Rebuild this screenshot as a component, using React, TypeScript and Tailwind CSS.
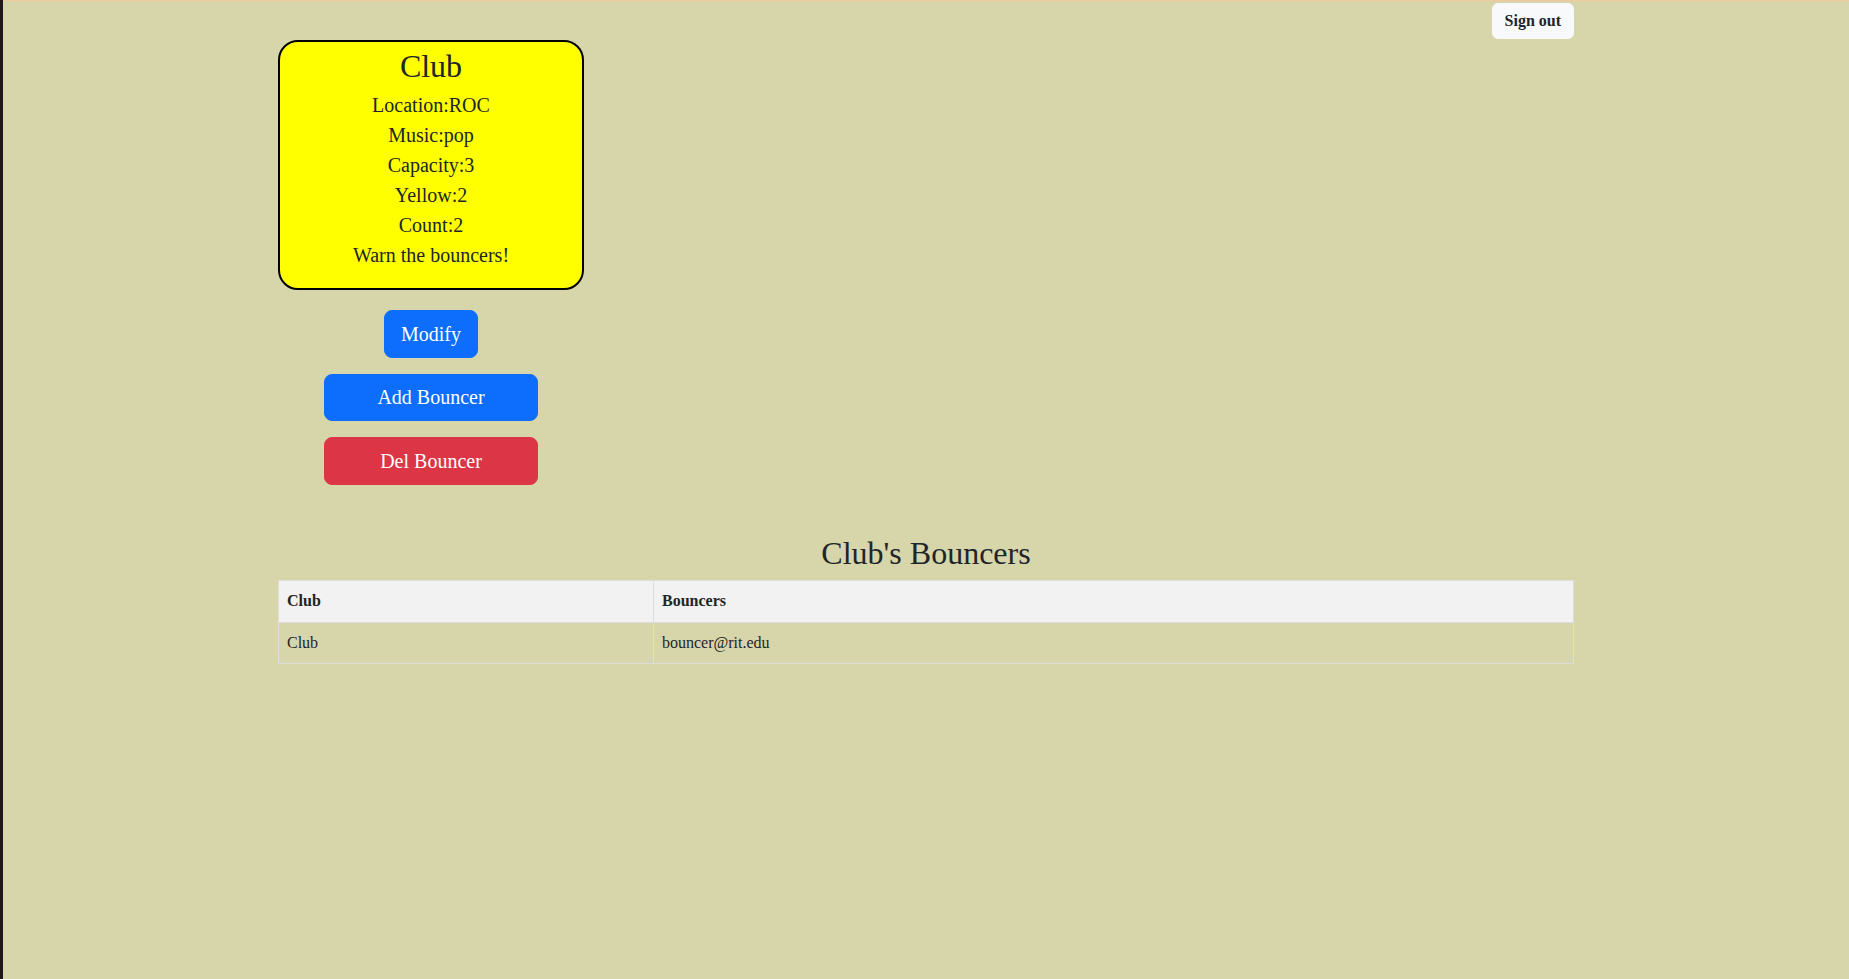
import React from "react";

export default function App() {
  return (
    <div
      className="min-h-[979px] flex bg-[#d7d5aa] text-[#212529]"
      style={{ fontFamily: '"Liberation Serif", "Times New Roman", serif' }}
    >
      <div className="w-[3px] shrink-0 bg-[#1f171f]" />
      <div className="flex-1 border-t border-[#f3c89e]">
        <div className="w-[1296px] mx-auto">
          <div className="flex justify-end pt-[2px]">
            <button className="bg-[#f8f9fa] border border-[#f8f9fa] rounded-md px-3 py-[5px] text-[16px] leading-6 font-bold text-[#212529]">
              Sign out
            </button>
          </div>

          <div className="w-[306px] mt-[1px] flex flex-col items-center">
            <div className="w-full bg-[#ffff00] border-2 border-black rounded-[20px] pt-[5px] pb-[18px] text-center">
              <h2 className="text-[32px] leading-[1.2] mb-[5px]">Club</h2>
              <div className="text-[20px] leading-[30px]">
                <div>Location:ROC</div>
                <div>Music:pop</div>
                <div>Capacity:3</div>
                <div>Yellow:2</div>
                <div>Count:2</div>
                <div>Warn the bouncers!</div>
              </div>
            </div>

            <button className="mt-[20px] bg-[#0d6efd] border border-[#0d6efd] text-white rounded-lg px-4 py-2 text-[20px] leading-[30px]">
              Modify
            </button>
            <button className="mt-4 w-[70%] bg-[#0d6efd] border border-[#0d6efd] text-white rounded-lg px-4 py-2 text-[20px] leading-[29px]">
              Add Bouncer
            </button>
            <button className="mt-4 w-[70%] bg-[#dc3545] border border-[#dc3545] text-white rounded-lg px-4 py-2 text-[20px] leading-[30px]">
              Del Bouncer
            </button>
          </div>

          <h2 className="mt-[49px] mb-[7px] text-center text-[32px] leading-[1.2]">
            Club's Bouncers
          </h2>

          <table className="w-full table-fixed border-collapse text-[16px] leading-6">
            <colgroup>
              <col className="w-[375px]" />
              <col />
            </colgroup>
            <thead>
              <tr className="bg-[#f2f2f2]">
                <th className="border border-[#dddddd] px-2 py-2 text-left font-bold h-[42px]">
                  Club
                </th>
                <th className="border border-[#dddddd] px-2 py-2 text-left font-bold">
                  Bouncers
                </th>
              </tr>
            </thead>
            <tbody>
              <tr>
                <td className="border border-[#dddddd] px-2 py-2">Club</td>
                <td className="border border-[#dddddd] px-2 py-2">bouncer@rit.edu</td>
              </tr>
            </tbody>
          </table>
        </div>
      </div>
    </div>
  );
}
